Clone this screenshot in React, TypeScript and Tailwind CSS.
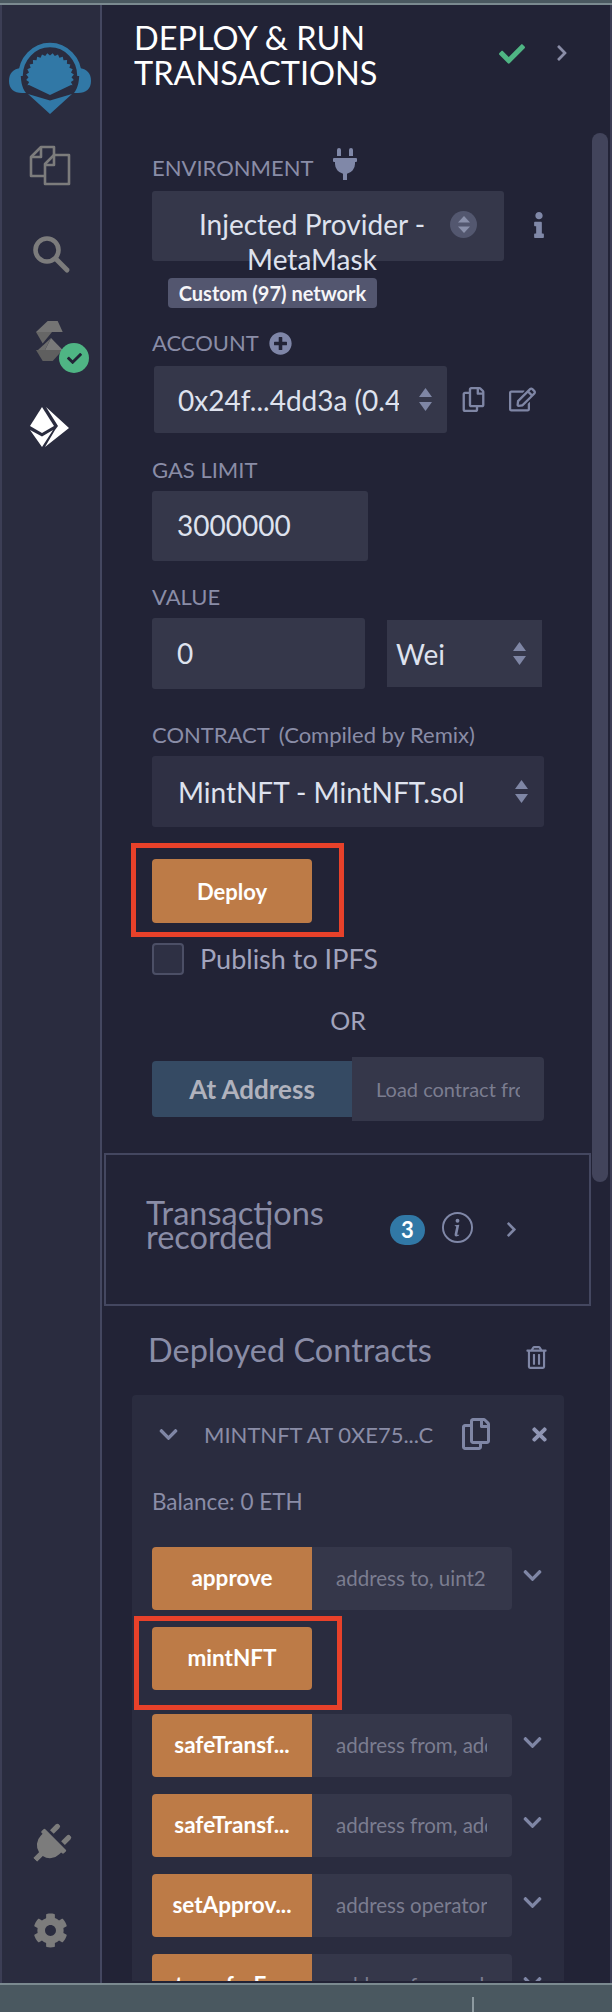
import React from "react";
import { FaPlug, FaInfo, FaPlusCircle, FaCheck, FaChevronRight, FaRegCopy, FaRegEdit, FaRegTrashAlt, FaTimes, FaChevronDown, FaCog } from "react-icons/fa";
import { BsInfoCircle } from "react-icons/bs";

function gearPoints() {
  const pts: string[] = [];
  const n = 34;
  for (let i = 0; i <= n; i++) {
    const a = ((-200 + (220 * i) / n) * Math.PI) / 180;
    const r = i % 2 === 0 ? 24 : 21.5;
    pts.push(`${(50 + r * Math.cos(a)).toFixed(1)},${(57 + r * Math.sin(a)).toFixed(1)}`);
  }
  return pts.concat(["71,65", "50,75", "29,65"]).join(" ");
}

function Logo() {
  return (
    <svg width="100" height="100" viewBox="0 0 100 100" className="block" fill="#3178a6">
      <path d="M21 48 C13 49 9 53 9 61 C9 69 14 73 22 73 H26 C22 68 20 60 21 48Z" />
      <path d="M79 48 C87 49 91 53 91 61 C91 69 86 73 78 73 H74 C78 68 80 60 79 48Z" />
      <path d="M20.5 56 A29.5 31 0 0 1 79.5 56" fill="none" stroke="#3178a6" strokeWidth="4.5" />
      <polygon points={gearPoints()} />
      <polygon points="28,74 50,80.5 72,74 50,94" />
    </svg>
  );
}

function FilesIcon() {
  return (
    <svg width="42" height="41" viewBox="0 0 42 41" fill="none" stroke="#7c7c7c" strokeWidth="2.6" strokeLinejoin="round">
      <path d="M15 31 H2 V12 L12 2 H25 V10" />
      <path d="M2 12 H12 V2" />
      <path d="M16 39 V19 L25 10 H40 V39 Z" />
      <path d="M16 20 H25 V10" />
    </svg>
  );
}

function SearchIcon() {
  return (
    <svg width="38" height="38" viewBox="0 0 38 38" fill="none" stroke="#7c7c7c">
      <circle cx="14" cy="14" r="11.5" strokeWidth="4.6" />
      <path d="M23 23 L34 34" strokeWidth="5" strokeLinecap="round" />
    </svg>
  );
}

function SolidityIcon() {
  return (
    <svg width="28" height="40" viewBox="0 0 28 40" className="block">
      <polygon points="11.7,0 21.7,0 26.7,11 0,11" fill="#747474" />
      <polygon points="0,11 16,11 6.7,22.5" fill="#666666" />
      <polygon points="15,17 26.7,29 9,29" fill="#7a7a7a" />
      <polygon points="15,17 9,29 2,29" fill="#6c6c6c" />
      <polygon points="0,29 26.7,29 16.7,40 6.7,40" fill="#5f5f5f" />
    </svg>
  );
}

function DeployIcon() {
  return (
    <svg width="40" height="40" viewBox="0 0 40 40" fill="#ffffff" className="block">
      <polygon points="12,0 0,19 12,26 24,19" />
      <polygon points="0,23 12,29.5 23,23 12,40" />
      <polygon points="16,0 39,21 15,40 25,23 28,19" />
    </svg>
  );
}

function Arrows({ color = "#7f86a5" }: { color?: string }) {
  return (
    <svg width="13" height="23" viewBox="0 0 13 23" fill={color} className="shrink-0">
      <polygon points="6.5,0 13,9 0,9" />
      <polygon points="0,14 13,14 6.5,23" />
    </svg>
  );
}

function Label({ children }: { children: React.ReactNode }) {
  return <div className="text-[22px] leading-[24px] text-[#8a8da7]">{children}</div>;
}

function ContractRow({ name, ph, chevron = true }: { name: string; ph?: string; chevron?: boolean }) {
  return (
    <div className="flex h-[63px] shrink-0 items-center">
      <div className={`flex h-full w-[160px] shrink-0 items-center justify-center bg-[#bd7b47] pb-[2px] text-[22.5px] font-bold text-white ${ph ? "rounded-l-[4px]" : "rounded-[4px]"}`}>
        {name}
      </div>
      {ph && (
        <div className="flex h-full w-[200px] items-center rounded-r-[4px] bg-[#35374a] pl-[24px]">
          <div className="w-[151px] overflow-hidden whitespace-nowrap text-[20.5px] text-[#7b7d90]">{ph}</div>
        </div>
      )}
      {chevron && <FaChevronDown className="-mt-[6px] ml-[10px] text-[#7f86a5]" size={21} />}
    </div>
  );
}

export default function App() {
  return (
    <div className="flex h-[2012px] w-[612px] flex-col overflow-hidden bg-[#222336] font-[Lato,sans-serif]">
      <div className="h-[5px] shrink-0 border-b-2 border-[#7b8a90] bg-[#4a5860]" />
      <div className="flex min-h-0 flex-1">
        <div className="flex w-[102px] shrink-0 flex-col items-center border-x-2 border-[#444760] border-l-[#3c3e55] bg-[#2a2c3f]">
          <div className="-ml-[2px] mt-[15px] shrink-0"><Logo /></div>
          <div className="-ml-[2px] mt-[25px]"><FilesIcon /></div>
          <div className="ml-[1px] mt-[50px]"><SearchIcon /></div>
          <div className="relative -ml-[2px] mt-[47px]">
            <SolidityIcon />
            <div className="absolute -right-[25px] top-[22px] flex h-[30px] w-[30px] items-center justify-center rounded-full bg-[#4fb584]">
              <FaCheck className="text-[#222336]" size={15} />
            </div>
          </div>
          <div className="-ml-[2px] mt-[46px]"><DeployIcon /></div>
          <div className="-ml-[2px] mt-auto"><FaPlug className="rotate-45 text-[#7c7c7c]" size={42} /></div>
          <div className="-ml-[2px] mb-[35px] mt-[47px]"><FaCog className="text-[#7c7c7c]" size={35} /></div>
        </div>

        <div className="relative min-w-0 flex-1 overflow-hidden border-r-2 border-[#3c3e55]">
          <div className="absolute left-[490px] top-[128px] h-[1049px] w-[16px] rounded-[8px] bg-[#42445b]" />

          <div className="relative flex h-[85px] pl-[32px] pt-[15px]">
            <h1 className="w-[353px] text-[32.5px] font-normal leading-[35px] text-white">DEPLOY &amp; RUN<br />TRANSACTIONS</h1>
            <FaCheck className="ml-[12px] mt-[21px] text-[#4fb584]" size={26} />
            <FaChevronRight className="ml-[28px] mt-[24px] text-[#8a8da7]" size={18} />
          </div>

          <div className="relative ml-[50px] mt-[66px] flex w-[392px] flex-col items-start">
            <div className="flex items-center">
              <Label>ENVIRONMENT</Label>
              <FaPlug className="-my-[6px] ml-[15px] -translate-y-[4px] text-[#8088a8]" size={32} />
            </div>
            <div className="relative mt-[11px] h-[70px] w-[352px] rounded-[3px] bg-[#35374a]">
              <div className="absolute left-[10px] top-[16px] w-[300px] text-center text-[28px] leading-[35px] text-[#dee2ee]">
                Injected Provider -<br />MetaMask
              </div>
              <div className="absolute left-[298px] top-[20px] flex h-[27px] w-[27px] items-center justify-center rounded-full bg-[#53576f]">
                <svg width="12" height="17" viewBox="0 0 12 17" fill="#8a90aa">
                  <polygon points="6,0 12,6.5 0,6.5" />
                  <polygon points="0,10.5 12,10.5 6,17" />
                </svg>
              </div>
              <FaInfo className="absolute -right-[48px] top-[21px] text-[#8088a8]" size={26} />
            </div>
            <div className="relative ml-[16px] mt-[17px] flex h-[30px] w-[209px] items-center justify-center rounded-[4px] bg-[#53566f] pb-[1px] text-[20px] font-bold text-[#f5f5f8]">
              Custom (97) network
            </div>

            <div className="mt-[23px] flex items-center">
              <Label>ACCOUNT</Label>
              <FaPlusCircle className="ml-[10px] text-[#7f86a8]" size={23} />
            </div>
            <div className="mt-[11px] flex items-center">
              <div className="ml-[2px] flex h-[67px] w-[293px] items-center rounded-[3px] bg-[#35374a] pl-[24px]">
                <div className="w-[221px] overflow-hidden whitespace-nowrap text-[28px] text-[#dee2ee]">0x24f...4dd3a (0.4 ether)</div>
                <div className="ml-[20px]"><Arrows /></div>
              </div>
              <FaRegCopy className="ml-[14px] text-[#7f86a5]" size={25} />
              <FaRegEdit className="ml-[23px] text-[#7f86a5]" size={27} />
            </div>

            <div className="mt-[25px]"><Label>GAS LIMIT</Label></div>
            <div className="mt-[9px] flex h-[70px] w-[216px] items-center rounded-[3px] bg-[#35374a] pb-[2px] pl-[25px] text-[28px] text-[#dee2ee]">3000000</div>

            <div className="mt-[24px]"><Label>VALUE</Label></div>
            <div className="mt-[9px] flex items-center">
              <div className="flex h-[71px] w-[213px] items-center rounded-[3px] bg-[#35374a] pb-[2px] pl-[25px] text-[28px] text-[#dee2ee]">0</div>
              <div className="ml-[22px] flex h-[67px] w-[155px] items-center justify-between bg-[#35374a] pl-[9px] pr-[16px] text-[28px] text-[#dee2ee]">
                Wei
                <Arrows />
              </div>
            </div>

            <div className="mt-[34px] flex h-[24px] items-center">
              <Label>CONTRACT</Label>
              <span className="ml-[9px] text-[22px] leading-[24px] text-[#8a8da7]">(Compiled by Remix)</span>
            </div>
            <div className="mt-[9px] flex h-[71px] w-[392px] items-center justify-between rounded-[3px] bg-[#2f3044] pl-[26px] pr-[16px] text-[28px] text-[#dee2ee]">
              MintNFT - MintNFT.sol
              <Arrows />
            </div>

            <div className="relative mt-[32px] flex h-[64px] w-[160px] items-center justify-center rounded-[4px] bg-[#bd7b47] text-[22px] font-bold text-white">
              Deploy
              <div className="absolute -left-[21px] -top-[16px] h-[94px] w-[213px] border-[5px] border-[#e8412a]" />
            </div>

            <div className="mt-[20px] flex items-center">
              <div className="h-[32px] w-[32px] rounded-[4px] border-2 border-[#4c4f66] bg-[#2e3044]" />
              <span className="ml-[16px] text-[27px] leading-[32px] text-[#a2a4bd]">Publish to IPFS</span>
            </div>

            <div className="mt-[30px] h-[30px] w-full text-center text-[25px] leading-[30px] text-[#a2a4bd]">OR</div>

            <div className="mt-[22px] flex w-full items-center">
              <div className="flex h-[56px] w-[200px] items-center justify-center rounded-l-[4px] bg-[#354a63] text-[26px] font-bold text-[#b0b2bd]">At Address</div>
              <div className="flex h-[64px] flex-1 items-center rounded-r-[4px] bg-[#35374a] pl-[24px]">
                <div className="w-[144px] overflow-hidden whitespace-nowrap text-[20px] text-[#7b7d90]">Load contract from Address</div>
              </div>
            </div>
          </div>

          <div className="relative ml-[2px] mt-[32px] flex h-[153px] w-[487px] items-center border-2 border-[#444760] pl-[40px]">
            <div className="-mt-[9px] w-[244px] text-[32.5px] leading-[24px] text-[#8a8da7]">Transactions<br />recorded</div>
            <div className="flex h-[30px] w-[35px] items-center justify-center rounded-full bg-[#3178a6] text-[22px] font-bold text-white">3</div>
            <BsInfoCircle className="-mt-[5px] ml-[17px] text-[#8088a8]" size={31} />
            <FaChevronRight className="ml-[30px] text-[#7f86a5]" size={17} />
          </div>

          <div className="mt-[26px] flex h-[36px] items-center pl-[46px]">
            <div className="w-[377px] text-[32.5px] leading-[36px] text-[#8a8da7]">Deployed Contracts</div>
            <FaRegTrashAlt className="mt-[14px] text-[#7f86a5]" size={23} />
          </div>

          <div className="ml-[30px] mt-[27px] flex h-[586px] w-[432px] flex-col overflow-hidden rounded-t-[4px] bg-[#2a2c3f]">
            <div className="flex h-[78px] shrink-0 items-center pl-[26px]">
              <FaChevronDown className="text-[#7f86a5]" size={21} />
              <div className="ml-[25px] w-[256px] whitespace-nowrap text-[22px] text-[#8a8da7]">MINTNFT AT 0XE75...C</div>
              <FaRegCopy className="text-[#7f86a5]" size={32} />
              <FaTimes className="ml-[37px] text-[#8f95b3]" size={21} />
            </div>
            <div className="ml-[20px] mt-[17px] h-[24px] shrink-0 text-[22.5px] leading-[24px] text-[#8a8da7]">Balance: 0 ETH</div>
            <div className="relative ml-[20px] mt-[33px] flex flex-col gap-[17px]">
              <ContractRow name="approve" ph="address to, uint256 tokenId" />
              <div className="relative mb-[7px]">
                <ContractRow name="mintNFT" chevron={false} />
                <div className="absolute -left-[18px] -top-[11px] h-[94px] w-[208px] border-[5px] border-[#e8412a]" />
              </div>
              <ContractRow name="safeTransf..." ph="address from, address to" />
              <ContractRow name="safeTransf..." ph="address from, address to" />
              <ContractRow name="setApprov..." ph="address operator, bool" />
              <ContractRow name="transferFr..." ph="address from, address to" />
            </div>
          </div>
        </div>
      </div>
      <div className="flex h-[29px] shrink-0 items-end border-t-2 border-[#7b8a90] bg-[#4a5860] pl-[472px]">
        <div className="h-[15px] w-[2px] bg-[#8d9aa0]" />
      </div>
    </div>
  );
}
